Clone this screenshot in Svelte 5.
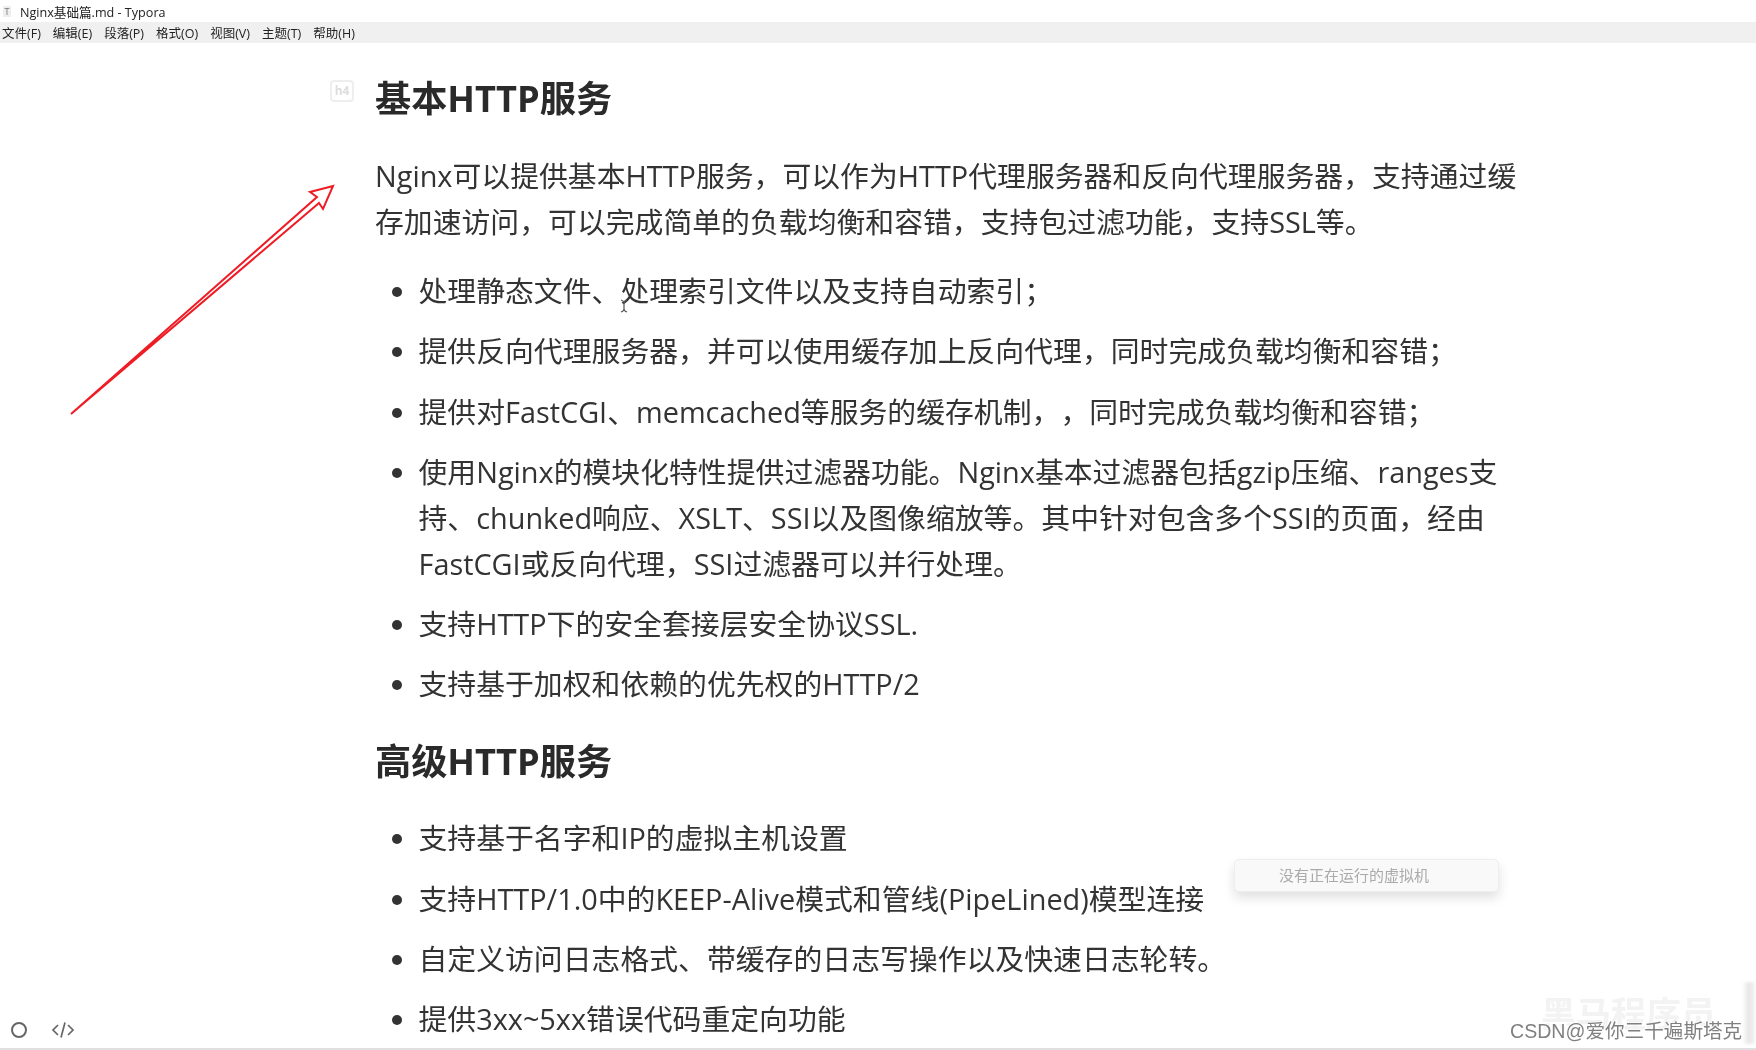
<script>
  const menus = ['文件(F)', '编辑(E)', '段落(P)', '格式(O)', '视图(V)', '主题(T)', '帮助(H)'];
  const basic = [
    '处理静态文件、处理索引文件以及支持自动索引；',
    '提供反向代理服务器，并可以使用缓存加上反向代理，同时完成负载均衡和容错；',
    '提供对FastCGI、memcached等服务的缓存机制，，同时完成负载均衡和容错；',
    '使用Nginx的模块化特性提供过滤器功能。Nginx基本过滤器包括gzip压缩、ranges支持、chunked响应、XSLT、SSI以及图像缩放等。其中针对包含多个SSI的页面，经由FastCGI或反向代理，SSI过滤器可以并行处理。',
    '支持HTTP下的安全套接层安全协议SSL.',
    '支持基于加权和依赖的优先权的HTTP/2'
  ];
  const advanced = [
    '支持基于名字和IP的虚拟主机设置',
    '支持HTTP/1.0中的KEEP-Alive模式和管线(PipeLined)模型连接',
    '自定义访问日志格式、带缓存的日志写操作以及快速日志轮转。',
    '提供3xx~5xx错误代码重定向功能'
  ];
</script>

<div class="window">
  <header class="titlebar">
    <span class="appicon">T</span>
    <span>Nginx基础篇.md - Typora</span>
  </header>
  <nav class="menubar">
    {#each menus as m}<span>{m}</span>{/each}
  </nav>
  <main class="doc">
    <h4><span class="badge">h4</span>基本HTTP服务</h4>
    <p>Nginx可以提供基本HTTP服务，可以作为HTTP代理服务器和反向代理服务器，支持通过缓存加速访问，可以完成简单的负载均衡和容错，支持包过滤功能，支持SSL等。</p>
    <ul>
      {#each basic as b}<li>{b}</li>{/each}
    </ul>
    <h4>高级HTTP服务</h4>
    <ul>
      {#each advanced as a}<li>{a}</li>{/each}
    </ul>
  </main>

  <svg class="arrow" width="400" height="440" viewBox="0 0 400 440" aria-hidden="true">
    <path d="M71 414 L317 197 L310 192 L333 186 L323 209 L319 203 Z" fill="#fff" stroke="#ee1c25" stroke-width="2" stroke-linejoin="miter"/>
  </svg>

  <svg class="cursor" width="10" height="14" viewBox="0 0 10 14" aria-hidden="true">
    <path d="M2 1 Q5 2 5 4 V10 Q5 12 2 13 M8 1 Q5 2 5 4 M5 10 Q5 12 8 13" fill="none" stroke="#555" stroke-width="1.2"/>
  </svg>

  <div class="vmtip">没有正在运行的虚拟机</div>

  <svg class="icon-circle" width="18" height="18" viewBox="0 0 18 18" aria-hidden="true">
    <circle cx="9" cy="9" r="7" fill="none" stroke="#666" stroke-width="2"/>
  </svg>
  <svg class="icon-code" width="24" height="18" viewBox="0 0 24 18" aria-hidden="true">
    <path d="M7 4 L2 9 L7 14 M17 4 L22 9 L17 14 M14 1.5 L10 16.5" fill="none" stroke="#666" stroke-width="1.7"/>
  </svg>

  <div class="ghost">黑马程序员</div>
  <div class="smear"></div>
  <div class="watermark">CSDN@爱你三千遍斯塔克</div>
  <div class="bottomline"></div>
</div>

<style>
  :global(body) { margin: 0; background: #fff; }
  .window {
    position: relative;
    height: 1050px;
    overflow: hidden;
    font-family: "Open Sans", "Noto Sans CJK SC", sans-serif;
    text-spacing-trim: space-all;
    color: #333;
    background: #fff;
  }
  .titlebar {
    height: 22px;
    display: flex;
    align-items: center;
    gap: 9px;
    padding-left: 3px;
    font-size: 12.6px;
    color: #222;
    filter: blur(0.35px);
  }
  .appicon {
    width: 8px;
    font-size: 9px;
    color: #777;
    background: #eee;
    text-align: center;
    line-height: 11px;
  }
  .menubar {
    height: 20px;
    padding-bottom: 1px;
    background: #f0f0f0;
    display: flex;
    align-items: center;
    gap: 12px;
    padding-left: 2px;
    font-size: 12.5px;
    color: #222;
  }
  .menubar span { filter: blur(0.35px); }
  .doc {
    width: 1150px;
    padding-left: 375px;
    padding-top: 32px;
    filter: blur(0.3px);
  }
  h4 {
    position: relative;
    margin: 0;
    font-size: 36.2px;
    line-height: 46px;
    font-weight: 700;
    color: #2a2a2a;
  }
  .badge {
    position: absolute;
    left: -45px;
    top: 5px;
    width: 20px;
    height: 18px;
    border: 2px solid #eee;
    border-radius: 4px;
    font-size: 12px;
    line-height: 18px;
    text-align: center;
    color: #ddd;
    font-weight: 700;
  }
  p {
    margin: 32px 0 0;
    font-size: 28.85px;
    line-height: 46px;
    color: #333;
  }
  ul {
    margin: 23px 0 0;
    padding-left: 43.5px;
    font-size: 28.85px;
    line-height: 46px;
    color: #333;
  }
  li { margin-bottom: 14.3px; }
  ul + h4 { margin-top: 31px; }
  h4 + ul { margin-top: 31px; }
  .arrow { position: absolute; left: 0; top: 0; }
  .cursor { position: absolute; left: 619px; top: 299px; }
  .vmtip {
    position: absolute;
    left: 1234px;
    top: 859px;
    width: 219px;
    height: 31px;
    padding-left: 44px;
    background: #f9f9f9;
    border: 1px solid #eee;
    border-radius: 5px;
    box-shadow: 0 6px 12px rgba(0, 0, 0, 0.12);
    font-size: 15px;
    line-height: 31px;
    color: #aaa;
    filter: blur(0.3px);
  }
  .icon-circle { position: absolute; left: 10px; top: 1021px; }
  .icon-code { position: absolute; left: 51px; top: 1021px; }
  .ghost {
    position: absolute;
    left: 1541px;
    top: 992px;
    font-size: 35px;
    line-height: 44px;
    font-weight: 700;
    color: #f3f3f3;
    white-space: nowrap;
    filter: blur(0.6px);
  }
  .smear {
    position: absolute;
    left: 1742px;
    top: 982px;
    width: 13px;
    height: 62px;
    background: linear-gradient(90deg, #fff, #e6e6e6 55%, #f4f4f4);
    filter: blur(1.5px);
  }
  .watermark {
    position: absolute;
    left: 1510px;
    top: 1017px;
    font-family: "Liberation Sans", "Noto Sans CJK SC", sans-serif;
    font-size: 19.6px;
    line-height: 28px;
    color: #808080;
    white-space: nowrap;
    text-shadow: 0 0 2px #fff, 0 0 2px #fff;
    filter: blur(0.3px);
  }
  .bottomline {
    position: absolute;
    left: 0;
    right: 0;
    bottom: 0;
    height: 2px;
    background: #e0e0e0;
  }
</style>
